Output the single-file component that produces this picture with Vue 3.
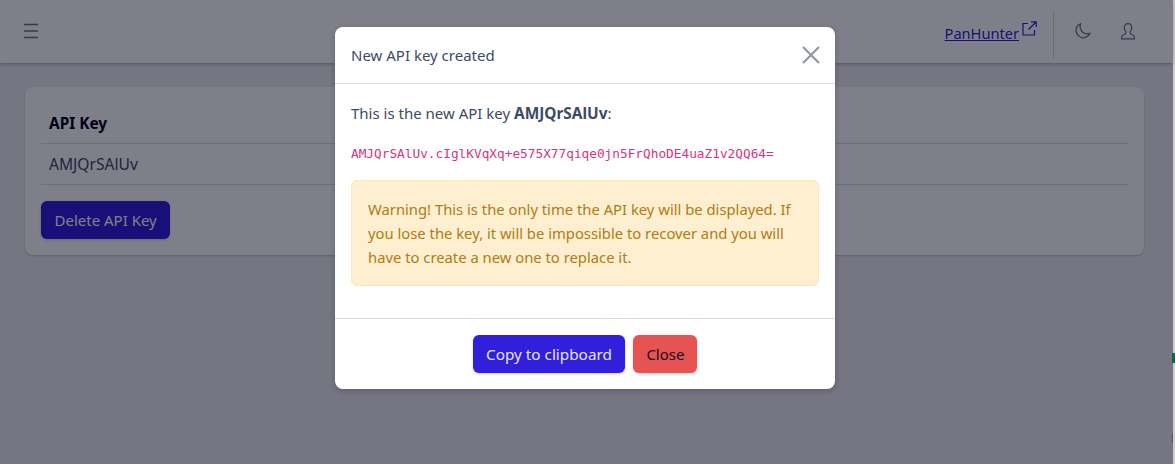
<template>
  <div class="root">
    <div class="page">
      <header class="topbar">
        <button class="icon-btn" aria-label="Menu">
          <svg width="16" height="16" viewBox="0 0 16 16" fill="none" stroke="#6e7583" stroke-width="1.3">
            <path d="M1 1.500h14M1 8h14M1 14.500h14" />
          </svg>
        </button>
        <div class="topbar-right">
          <a class="brand-link" href="#">PanHunter</a>
          <svg class="ext" width="15" height="15" viewBox="0 0 15 15" fill="none" stroke="#321fdb" stroke-width="1.2">
            <path d="M6 2.500H1v11.500h11.500V9" />
            <path d="M6.500 8.500 14 1M9 .8h5.200V6" />
          </svg>
          <span class="divider"></span>
          <button class="icon-btn moon" aria-label="Theme">
            <svg width="16" height="16" viewBox="0 0 18 18" fill="none" stroke="#6e7583" stroke-width="1.400">
              <path d="M6.200 1C3 2.400 1 5.300 1.200 8.600c.3 4.300 3.800 8 8 8 3.200 0 6.200-2 7.500-5-4.800 1.600-9.200-.7-10.500-4.800-.6-1.900-.5-3.900 0-5.800z" />
            </svg>
          </button>
          <button class="icon-btn user" aria-label="Account">
            <svg width="16" height="19" viewBox="0 0 18 20" fill="none" stroke="#6e7583" stroke-width="1.400">
              <path d="M9 1.200c-2.600 0-4.200 2-4.200 4.600 0 1.800.7 3.300 1.700 4.300v1.500c0 .8-.5 1.200-1.300 1.500-1.900.7-3.300 1.500-3.300 3.200v2.100h14.200v-2.100c0-1.700-1.400-2.500-3.300-3.200-.8-.3-1.300-.7-1.300-1.500v-1.500c1-1 1.700-2.500 1.700-4.300 0-2.600-1.600-4.600-4.200-4.600z" />
            </svg>
          </button>
        </div>
      </header>

      <main class="content">
        <section class="card">
          <table class="keys">
            <thead>
              <tr><th>API Key</th></tr>
            </thead>
            <tbody>
              <tr><td>AMJQrSAlUv</td></tr>
            </tbody>
          </table>
          <button class="btn btn-primary">Delete API Key</button>
        </section>
      </main>

      <div class="backdrop"></div>

      <div class="modal">
        <div class="modal-head">
          <h5>New API key created</h5>
          <button class="close" aria-label="Close">
            <svg width="18" height="18" viewBox="0 0 18 18" fill="none" stroke="#8f949b" stroke-width="2">
              <path d="M1 1l16 16M17 1 1 17" />
            </svg>
          </button>
        </div>
        <div class="modal-body">
          <p class="lead">This is the new API key <strong>AMJQrSAlUv</strong>:</p>
          <code class="key">{{ apiKey }}</code>
          <div class="warning">{{ warning }}</div>
        </div>
        <div class="modal-foot">
          <button class="btn btn-primary">Copy to clipboard</button>
          <button class="btn btn-danger">Close</button>
        </div>
      </div>
    </div>
    <span class="edge-mark"></span>
    <span class="edge-tick"></span>
  </div>
</template>

<script setup>
const apiKey = 'AMJQrSAlUv.cIglKVqXq+e575X77qiqe0jn5FrQhoDE4uaZ1v2QQ64='
const warning = 'Warning! This is the only time the API key will be displayed. If you lose the key, it will be impossible to recover and you will have to create a new one to replace it.'
</script>

<style>
html, body { margin: 0; height: 100%; overflow: hidden; }
</style>

<style scoped>
.root {
  position: relative;
  display: flex;
  height: 464px;
  overflow: hidden;
  background: #cfcfd1;
  font-family: "Noto Sans", "Open Sans", sans-serif;
  font-size: 15px;
  color: #3c4b64;
}
.page {
  position: relative;
  width: 1173px;
  flex: none;
  background: #ebedef;
}
.topbar {
  display: flex;
  align-items: center;
  justify-content: space-between;
  height: 63px;
  padding: 0 37px 1px 23px;
  box-sizing: border-box;
  background: #fff;
  box-shadow: 0 1px 3px rgba(0, 0, 21, .3);
}
.icon-btn {
  display: flex;
  padding: 0;
  border: 0;
  background: none;
}
.topbar-right {
  display: flex;
  align-items: center;
}
.brand-link {
  margin-top: 3px;
  font-size: 14.6px;
  color: #321fdb;
}
.ext {
  align-self: flex-start;
  margin: 17px 0 0 3px;
}
.divider {
  align-self: flex-start;
  width: 1px;
  height: 47px;
  margin: 7px 21px 0 16px;
  background: #d8dbe0;
}
.user {
  margin-left: 29px;
}
.content {
  padding: 24px 29px 0 25px;
}
.card {
  padding: 16px;
  background: #fff;
  border-radius: 8px;
  box-shadow: 0 1px 2px rgba(0, 0, 21, .2);
}
.keys {
  width: 100%;
  border-collapse: collapse;
  margin-bottom: 16px;
}
.keys th, .keys td {
  text-align: left;
  padding: 0 8px;
  height: 40px;
  border-bottom: 1px solid #d8dbe0;
}
.keys th {
  font-size: 15.4px;
  font-weight: 700;
  color: #000015;
}
.keys td {
  font-size: 15.6px;
}
.btn {
  height: 38px;
  padding: 0 13px;
  border: 0;
  border-radius: 6px;
  font-family: inherit;
  font-size: 15px;
  box-shadow: 0 1px 3px rgba(0, 0, 21, .2);
}
.btn-primary {
  padding: 0 13.5px;
  background: #321fdb;
  color: #fff;
}
.btn-danger {
  background: #e55353;
  color: #1d0b1e;
}
.modal-foot .btn-primary {
  font-size: 15.3px;
  color: #e6e4fb;
}
.backdrop {
  position: absolute;
  inset: 0;
  background: rgba(0, 0, 21, .5);
}
.edge-mark {
  position: absolute;
  right: 0;
  top: 353px;
  width: 3px;
  height: 10px;
  background: #0c6b3c;
}
.edge-tick {
  position: absolute;
  right: 2px;
  top: 433px;
  width: 1px;
  height: 10px;
  background: #56565f;
}
.modal {
  position: absolute;
  left: 335px;
  top: 27px;
  width: 500px;
  background: #fff;
  border-radius: 8px;
  box-shadow: 0 2px 6px rgba(0, 0, 21, .2);
}
.modal-head {
  display: flex;
  align-items: center;
  justify-content: space-between;
  height: 56px;
  padding: 0 15px 0 16px;
  border-bottom: 1px solid #d8dbe0;
}
.modal-head h5 {
  margin: 0;
  font-size: 15px;
  font-weight: 400;
}
.close {
  display: flex;
  padding: 0;
  border: 0;
  background: none;
}
.modal-body {
  padding: 18px 16px 32px;
}
.lead {
  margin: 0 0 20px;
  line-height: 22px;
}
.lead strong {
  font-size: 15.4px;
}
.key {
  display: block;
  font-family: "DejaVu Sans Mono", "Liberation Mono", monospace;
  font-size: 12.78px;
  line-height: 18px;
  color: #d63384;
  margin-bottom: 17px;
}
.warning {
  padding: 16px;
  font-size: 14.8px;
  line-height: 24px;
  background: #fdefd0;
  border: 1px solid #fce6b8;
  border-radius: 6px;
  color: #b27b10;
}
.modal-foot {
  display: flex;
  justify-content: center;
  gap: 8px;
  padding: 16px;
  border-top: 1px solid #d8dbe0;
}
</style>
